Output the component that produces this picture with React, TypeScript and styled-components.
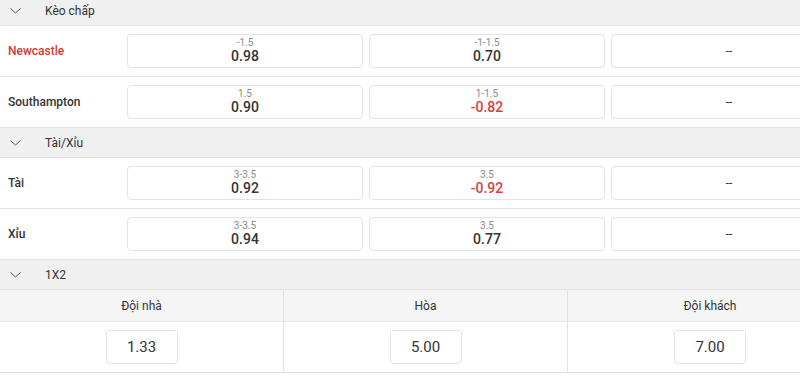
import React from "react";
import styled, { createGlobalStyle } from "styled-components";

const Global = createGlobalStyle`
  html, body { margin: 0; padding: 0; background: #fff; overflow: hidden; }
  body { font-family: Roboto, "Noto Sans", Arial, sans-serif; color: #333; }
`;

const Page = styled.div`
  width: 852px;
  margin-top: -4px;
`;

const SectionHeader = styled.div`
  display: flex;
  align-items: center;
  height: 29px;
  background: #f0f0f0;
  border-bottom: 1px solid #e2e2e2;
  font-size: 12px;
  color: #333;
`;

const Chevron = styled.span`
  display: flex;
  width: 45px;
  padding-left: 10px;
  box-sizing: border-box;
`;

const OddsRow = styled.div`
  display: grid;
  grid-template-columns: 121px repeat(3, 236px);
  column-gap: 6px;
  align-items: center;
  padding: 8px 0;
  border-bottom: 1px solid #e6e6e6;
`;

const Label = styled.div<{ $hl?: boolean }>`
  padding-left: 8px;
  font-size: 12px;
  font-weight: 500;
  color: ${(p) => (p.$hl ? "#d13b2e" : "#333")};
`;

const OddBox = styled.div`
  height: 34px;
  box-sizing: border-box;
  border: 1px solid #e3e3e3;
  border-radius: 4px;
  display: flex;
  flex-direction: column;
  align-items: center;
  justify-content: center;
`;

const Line = styled.div`
  font-size: 10px;
  line-height: 11px;
  color: #8a8a8a;
`;

const Value = styled.div<{ $neg?: boolean }>`
  font-size: 14px;
  line-height: 17px;
  font-weight: 500;
  color: ${(p) => (p.$neg ? "#e03c3c" : "#333")};
`;

const Dash = styled.div`
  font-size: 12px;
  color: #333;
`;

const Table = styled.div`
  display: grid;
  grid-template-columns: repeat(3, 1fr);
  border-bottom: 1px solid #e2e2e2;
`;

const Col = styled.div<{ $last?: boolean }>`
  display: flex;
  flex-direction: column;
  border-right: ${(p) => (p.$last ? "none" : "1px solid #e2e2e2")};
`;

const ColHead = styled.div`
  height: 31px;
  background: #f5f5f5;
  border-bottom: 1px solid #e8e8e8;
  display: flex;
  align-items: center;
  justify-content: center;
  font-size: 12px;
  color: #333;
`;

const ColBody = styled.div`
  height: 50px;
  display: flex;
  align-items: center;
  justify-content: center;
`;

const PriceBox = styled.div`
  width: 72px;
  height: 34px;
  box-sizing: border-box;
  border: 1px solid #e3e3e3;
  border-radius: 4px;
  display: flex;
  align-items: center;
  justify-content: center;
  font-size: 15px;
  color: #333;
`;

const ChevronIcon = () => (
  <svg width="11" height="6" viewBox="0 0 11 6" fill="none">
    <polyline points="0.5,0.5 5.5,5 10.5,0.5" stroke="#555" strokeWidth="1" />
  </svg>
);

type Odd = { line?: string; value?: string };
type Row = { label: string; hl?: boolean; odds: Odd[] };

const Header = ({ title }: { title: string }) => (
  <SectionHeader>
    <Chevron>
      <ChevronIcon />
    </Chevron>
    {title}
  </SectionHeader>
);

const Rows = ({ rows }: { rows: Row[] }) => (
  <>
    {rows.map((r) => (
      <OddsRow key={r.label}>
        <Label $hl={r.hl}>{r.label}</Label>
        {r.odds.map((o, i) => (
          <OddBox key={i}>
            {o.value ? (
              <>
                <Line>{o.line}</Line>
                <Value $neg={o.value.startsWith("-")}>{o.value}</Value>
              </>
            ) : (
              <Dash>--</Dash>
            )}
          </OddBox>
        ))}
      </OddsRow>
    ))}
  </>
);

const handicap: Row[] = [
  { label: "Newcastle", hl: true, odds: [{ line: "-1.5", value: "0.98" }, { line: "-1-1.5", value: "0.70" }, {}] },
  { label: "Southampton", odds: [{ line: "1.5", value: "0.90" }, { line: "1-1.5", value: "-0.82" }, {}] },
];

const overUnder: Row[] = [
  { label: "Tài", odds: [{ line: "3-3.5", value: "0.92" }, { line: "3.5", value: "-0.92" }, {}] },
  { label: "Xỉu", odds: [{ line: "3-3.5", value: "0.94" }, { line: "3.5", value: "0.77" }, {}] },
];

const x12 = [
  { head: "Đội nhà", price: "1.33" },
  { head: "Hòa", price: "5.00" },
  { head: "Đội khách", price: "7.00" },
];

export default function App() {
  return (
    <Page>
      <Global />
      <Header title="Kèo chấp" />
      <Rows rows={handicap} />
      <Header title="Tài/Xỉu" />
      <Rows rows={overUnder} />
      <Header title="1X2" />
      <Table>
        {x12.map((c, i) => (
          <Col key={c.head} $last={i === x12.length - 1}>
            <ColHead>{c.head}</ColHead>
            <ColBody>
              <PriceBox>{c.price}</PriceBox>
            </ColBody>
          </Col>
        ))}
      </Table>
    </Page>
  );
}
